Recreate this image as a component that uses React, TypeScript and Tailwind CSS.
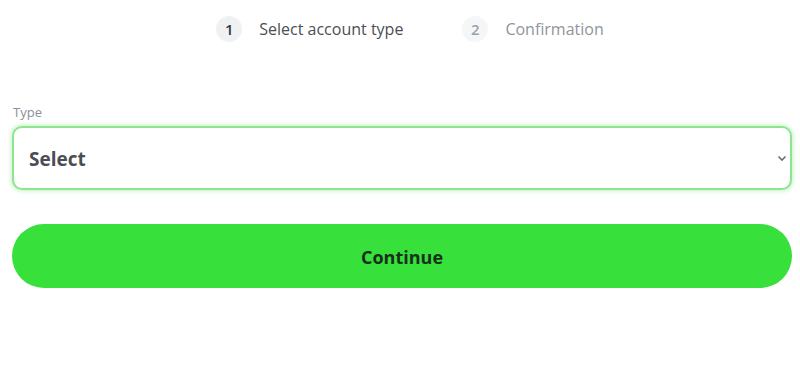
import type { FC } from "react";

const steps = [
  { num: "1", label: "Select account type", active: true },
  { num: "2", label: "Confirmation", active: false },
];

const App: FC = () => {
  return (
    <div className="w-[800px] h-[384px] bg-white font-['Open_Sans','Noto_Sans',sans-serif]">
      <div className="flex justify-center items-center gap-[59px] pt-[16px] pl-[20px]">
        {steps.map((s) => (
          <div key={s.num} className="flex items-center gap-[17px]">
            <span
              className={
                "w-[26px] h-[26px] rounded-full flex items-center justify-center text-[15px] font-semibold " +
                (s.active ? "bg-[#f0f1f2] text-[#33383d]" : "bg-[#f5f6f7] text-[#9aa1a8]")
              }
            >
              {s.num}
            </span>
            <span className={"text-[16px] " + (s.active ? "text-[#4a4f55]" : "text-[#8e959c]")}>{s.label}</span>
          </div>
        ))}
      </div>

      <div className="pl-[12px] pr-[8px] mt-[61px]">
        <label className="block text-[13px] text-[#8a9096] pl-[1px] mb-[3px]">Type</label>
        <div className="relative">
          <select className="w-full h-[64px] appearance-none rounded-[10px] border-2 border-[#8de68f] shadow-[0_0_4px_1px_rgba(80,220,90,0.35)] bg-white pl-[15px] pt-[4px] text-[19px] font-bold text-[#4a4d52] outline-none">
            <option>Select</option>
          </select>
          <svg
            className="absolute right-[5px] top-[29px] pointer-events-none"
            width="10"
            height="7"
            viewBox="0 0 10 7"
            fill="none"
          >
            <path d="M1.5 1.5 L5 5 L8.5 1.5" stroke="#6b6f74" strokeWidth="1.6" />
          </svg>
        </div>

        <button className="mt-[34px] w-full h-[64px] pt-[3px] rounded-full bg-[#37e03a] text-[18px] font-bold text-[#17301a]">
          Continue
        </button>
      </div>
    </div>
  );
};

export default App;
